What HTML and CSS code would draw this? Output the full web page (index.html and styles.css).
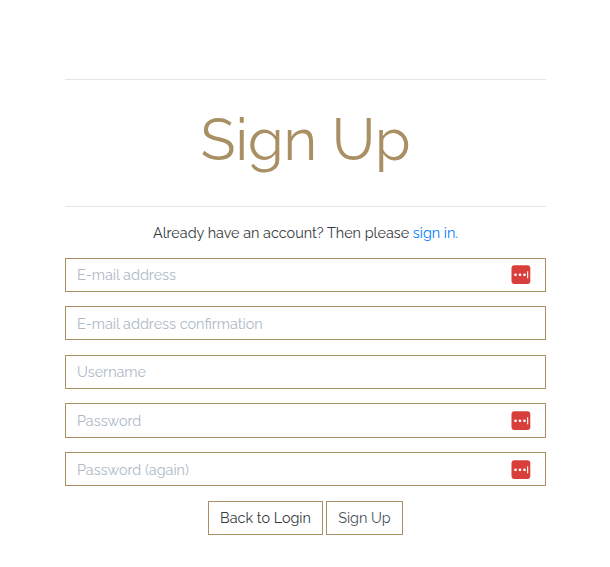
FILE: index.html
```html
<!DOCTYPE html>
<html lang="en">
<head>
<meta charset="utf-8">
<title>Sign Up</title>
<link rel="stylesheet" href="styles.css">
</head>
<body>
<svg class="sprite" aria-hidden="true">
  <symbol id="manager" viewBox="0 0 20 20">
    <rect x=".5" y=".3" width="18.8" height="18.8" rx="3" fill="#d93f3a"/>
    <g fill="#fff"><circle cx="4.5" cy="9.8" r="1.35"/><circle cx="9" cy="9.8" r="1.35"/><circle cx="13.5" cy="9.8" r="1.35"/><rect x="16.1" y="6.3" width="1.1" height="7"/></g>
  </symbol>
</svg>
<main class="signup">
  <header class="heading"><h1>Sign Up</h1></header>
  <p class="intro">Already have an account? Then please <a href="#">sign in.</a></p>
  <form class="form">
    <div class="field"><input type="email" placeholder="E-mail address"><svg class="icon"><use href="#manager"/></svg></div>
    <div class="field"><input type="email" placeholder="E-mail address confirmation"></div>
    <div class="field"><input type="text" placeholder="Username"></div>
    <div class="field"><input type="password" placeholder="Password"><svg class="icon"><use href="#manager"/></svg></div>
    <div class="field"><input type="password" placeholder="Password (again)"><svg class="icon"><use href="#manager"/></svg></div>
    <div class="actions"><button class="back" type="button">Back to Login</button><button class="submit" type="submit">Sign Up</button></div>
  </form>
</main>
</body>
</html>
```
FILE: styles.css
```css
* { box-sizing: border-box; }
body { margin: 0; background: #fff; color: #343a40; font: 400 14.4px/22px Raleway, Lato, sans-serif; }
.sprite { position: absolute; width: 0; height: 0; }
.signup { width: 481px; margin: 79px 0 0 65px; }
.heading { height: 128px; border: solid #e5e5e5; border-width: 1px 0; display: flex; align-items: center; justify-content: center; }
h1 { margin: 0; font-size: 57.6px; line-height: 68px; font-weight: 400; color: #a89064; padding-bottom: 6px; white-space: nowrap; }
.intro { margin: 15px 0 13.6px; text-align: center; white-space: nowrap; }
a { color: #007bff; text-decoration: none; }
.form { display: flex; flex-direction: column; gap: 14.3px; }
.field { display: flex; align-items: center; height: 34.28px; border: 1px solid #a89064; padding: 0.16px 14px 0 11px; }
input { flex: 1; min-width: 0; height: 32px; padding: 0; border: 0; outline: 0; background: transparent; font: inherit; }
input::placeholder { color: #acb9c6; opacity: 1; }
.icon { width: 20px; height: 20px; flex: none; margin-top: 1px; }
.actions { display: flex; justify-content: center; gap: 3px; padding-top: 0.5px; }
button { height: 34px; padding: 0; border: 1px solid #a89064; background: #fff; color: #495057; font: inherit; white-space: nowrap; }
.back { width: 115px; color: #343a40; }
.submit { width: 77px; }
```
